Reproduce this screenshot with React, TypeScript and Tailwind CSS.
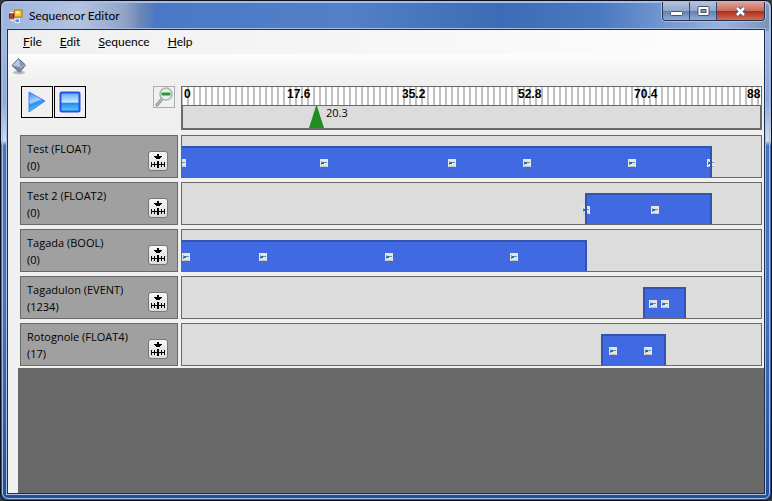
import React from "react";

const tracks = [
  { name: "Test", type: "FLOAT", value: 0, clips: [{ start: 0, end: 530 }], keys: [-4, 138, 266, 341, 446, 525] },
  { name: "Test 2", type: "FLOAT2", value: 0, clips: [{ start: 403, end: 530 }], keys: [400, 469] },
  { name: "Tagada", type: "BOOL", value: 0, clips: [{ start: 0, end: 405 }], keys: [0, 77, 203, 328] },
  { name: "Tagadulon", type: "EVENT", value: 1234, clips: [{ start: 461, end: 504 }], keys: [467, 479] },
  { name: "Rotognole", type: "FLOAT4", value: 17, clips: [{ start: 419, end: 484 }], keys: [427, 462] },
];

const span = 579;
const pct = (n: number) => `${(n / span) * 100}%`;

const labels = [
  { text: "0", at: 2 },
  { text: "17.6", at: 105 },
  { text: "35.2", at: 220 },
  { text: "52.8", at: 336 },
  { text: "70.4", at: 452 },
  { text: "88", at: 565 },
];

function AppIcon() {
  return (
    <svg width="14" height="14" viewBox="0 0 14 14" aria-hidden="true">
      <rect x="5.500" y="1" width="7.500" height="7" fill="#f6c733" stroke="#a9771a" />
      <rect x="6.500" y="2" width="4" height="3" fill="#ffeb91" />
      <rect x="0.500" y="5" width="4" height="4" fill="#d93a2b" stroke="#8d1f18" />
      <rect x="6" y="10" width="4.500" height="3.500" fill="#4d8ce8" stroke="#e4efff" />
      <path d="M1 3.500H4M2 11.500H4.500" stroke="#fff" />
    </svg>
  );
}

function DiamondIcon() {
  return (
    <svg width="16" height="17" viewBox="0 0 16 17" aria-hidden="true">
      <ellipse cx="8" cy="14.500" rx="6" ry="1.800" fill="#8b8b8b" opacity=".55" />
      <path d="M7.500 .5 14.500 7 8.500 14.500 1 7.500Z" fill="#8292b4" stroke="#5c6984" />
      <path d="M7.500 1 9.500 9.500 1.500 7.500Z" fill="#b9c6dd" />
      <path d="M1.500 7.500 9.500 9.500 8.500 14Z" fill="#7487aa" />
      <path d="M7.500 1 9.500 9.500 14 7" fill="none" stroke="#a8b8d5" />
    </svg>
  );
}

function PlayIcon() {
  return (
    <svg width="20" height="24" viewBox="0 0 20 24" aria-hidden="true">
      <defs>
        <linearGradient id="play" x1="0" y1="0" x2="0.300" y2="1">
          <stop offset="0" stopColor="#3d7cf0" />
          <stop offset=".5" stopColor="#a4d6ff" />
          <stop offset=".62" stopColor="#2f8cf0" />
          <stop offset="1" stopColor="#57dcff" />
        </linearGradient>
      </defs>
      <path d="M2 2 18 11 2 22Z" fill="url(#play)" stroke="#4a80f0" strokeLinejoin="round" />
    </svg>
  );
}

function StopIcon() {
  return (
    <svg width="22" height="22" viewBox="0 0 22 22" aria-hidden="true">
      <defs>
        <linearGradient id="stop" x1="0" y1="0" x2="0" y2="1">
          <stop offset="0" stopColor="#5fa4fa" />
          <stop offset=".5" stopColor="#c4ecff" />
          <stop offset=".58" stopColor="#2f86ee" />
          <stop offset="1" stopColor="#4bdcff" />
        </linearGradient>
      </defs>
      <rect x="1.500" y="1.500" width="19" height="19" rx="1" fill="url(#stop)" stroke="#2450e6" strokeWidth="2" />
    </svg>
  );
}

function ZoomOutIcon() {
  return (
    <svg width="20" height="20" viewBox="0 0 20 20" aria-hidden="true">
      <path d="M8 12 3 18" stroke="#8d8d8d" strokeWidth="3" strokeLinecap="round" />
      <path d="M8 12 3 18" stroke="#ddd" strokeWidth="1" strokeLinecap="round" />
      <circle cx="12" cy="7" r="6" fill="#e4f1ea" stroke="#a9b5b2" strokeWidth="1.500" />
      <rect x="7.500" y="5.500" width="9" height="3" rx="1" fill="#2e9a2e" />
    </svg>
  );
}

function KeyInsertIcon() {
  return (
    <svg width="16" height="16" viewBox="0 0 16 16" shapeRendering="crispEdges" aria-hidden="true">
      <path d="M7 1H9V3H12V4H11V5H10V6H6V5H5V4H4V3H7Z" />
      <path d="M1 9H2V11H4V9H5V11H7V8H9V11H11V9H12V11H14V9H15V14H14V12H12V14H11V12H9V15H7V12H5V14H4V12H2V14H1Z" />
    </svg>
  );
}

function KeyMarker() {
  return (
    <svg className="block" width="8" height="8" viewBox="0 0 8 8" shapeRendering="crispEdges" aria-hidden="true">
      <rect width="8" height="8" rx="1" fill="#e4e6e6" />
      <path d="M1 7H7V8H1Z" fill="#c4c2b8" />
      <path d="M1 2H2V3H3V5H2V6H1Z" fill="#77aac8" />
      <path d="M2 3H4V5H2Z" fill="#2169a0" />
      <path d="M1 4H3V5H1Z" fill="#2169a0" />
      <path d="M4 3H7V4H4Z" fill="#5b94ba" />
    </svg>
  );
}

function TitleBar() {
  return (
    <header className="relative flex h-[26px] items-center gap-1.5 pl-0.5">
      <AppIcon />
      <h1 className="text-[12px] leading-4 text-black">Sequencor Editor</h1>
      <div className="absolute -top-px right-0 flex h-[19px] overflow-hidden rounded-b border border-t-0 border-[#26334e] shadow-[0_0_0_1px_#a9c0e6]">
        <button aria-label="Minimize" className="flex w-[27px] items-center justify-center border-r border-[#34466c] bg-[linear-gradient(180deg,#b4c4df,#93a8cd_48%,#5f7fb0_50%,#8facd8)]">
          <svg width="13" height="13" viewBox="0 0 13 13" aria-hidden="true"><rect x=".5" y="6.500" width="12" height="4" rx="1" fill="#fff" stroke="#4b5366" /></svg>
        </button>
        <button aria-label="Maximize" className="flex w-[27px] items-center justify-center border-r border-[#34466c] bg-[linear-gradient(180deg,#b4c4df,#93a8cd_48%,#5f7fb0_50%,#8facd8)]">
          <svg width="13" height="11" viewBox="0 0 13 11" aria-hidden="true"><rect x="1" y=".5" width="11" height="9" rx="1" fill="#fff" stroke="#4b5366" /><rect x="4" y="3.500" width="5" height="3" fill="#7793bf" stroke="#4b5366" /></svg>
        </button>
        <button aria-label="Close" className="flex w-[47px] items-center justify-center bg-[linear-gradient(180deg,#dda39b,#cb6d5c_48%,#b02c18_50%,#cf6e55)]">
          <svg width="13" height="11" viewBox="0 0 13 11" aria-hidden="true"><path d="M3 2 10 9M10 2 3 9" stroke="#55506a" strokeWidth="4.500" /><path d="M3 2 10 9M10 2 3 9" stroke="#fff" strokeWidth="2.600" /></svg>
        </button>
      </div>
    </header>
  );
}

function Ruler() {
  return (
    <div className="relative flex h-11 min-w-0 flex-1 flex-col border border-b-2 border-[#696969] bg-[#dcdcdc]">
      <div className="h-[19px] border-b border-[#696969] bg-[repeating-linear-gradient(90deg,#c0c0c0_0_1px,#fff_1px_5px,#c0c0c0_5px_6px)] font-['Liberation_Sans',Arial,sans-serif]">
        {labels.map((l) => (
          <span key={l.text} className="absolute top-0 text-[12px] leading-[14px] font-bold" style={{ left: pct(l.at) }}>{l.text}</span>
        ))}
      </div>
      <div className="flex-1 border-x border-[#696969]" />
      <div className="absolute top-[19px] flex items-start gap-0.5" style={{ left: pct(127) }}>
        <svg width="15" height="22" viewBox="0 0 15 22" aria-hidden="true"><path d="M7 0H8L15 22H0Z" fill="#228b22" /></svg>
        <span className="font-['Open_Sans',sans-serif] text-[11px] leading-[14px]">20.3</span>
      </div>
    </div>
  );
}

function TrackRow({ track }: { track: (typeof tracks)[number] }) {
  return (
    <li className="flex gap-[3px]">
      <div className="flex h-[43px] w-[158px] shrink-0 items-end justify-between border border-[#696969] bg-[#a0a0a0] pr-[9px] pb-1.5 pl-1.5">
        <div className="self-start pt-1 font-['Open_Sans',sans-serif] text-[11px] leading-[17px]">
          <p>{track.name} ({track.type})</p>
          <p>({track.value})</p>
        </div>
        <button aria-label={`Insert key in ${track.name}`} className="flex size-5 items-center justify-center rounded-[3px] border border-[#777] bg-linear-to-b from-[#f8f8f8] to-[#dcdcdc]">
          <KeyInsertIcon />
        </button>
      </div>
      <div className="relative min-w-0 flex-1 overflow-hidden border border-[#696969] bg-[#dcdcdc]">
        {track.clips.map((c) => (
          <div key={c.start} className="absolute top-2.5 bottom-0 bg-[#4169e1]" style={{ left: pct(c.start), width: pct(c.end - c.start) }} />
        ))}
        {track.keys.map((k) => (
          <div key={k} className="absolute top-[23px]" style={{ left: pct(k) }}><KeyMarker /></div>
        ))}
        {track.clips.map((c) => (
          <div key={c.start} className={`absolute top-2.5 bottom-0 border-t-2 border-r-2 border-[#3353b0] ${c.start ? "border-l-2" : ""}`} style={{ left: pct(c.start), width: pct(c.end - c.start) }} />
        ))}
      </div>
    </li>
  );
}

export default function App() {
  return (
    <div className="flex min-h-screen flex-col bg-[#3b3b35] font-[Lato,'Open_Sans',sans-serif] text-black">
      <div className="flex flex-1 flex-col rounded-[7px] border border-[#0b1020] bg-[linear-gradient(180deg,#a9bfe4_0,#8ca8d8_20%,#d3dcee_28%,#4a74b8_29%,#4a74b8_60%,#254f91_100%)] p-px">
        <div className="flex flex-1 flex-col rounded-md border border-[#a6bfe8] bg-[linear-gradient(90deg,#9eb5dc_0,#b4c3df_10%,#8fa3c8_16%,#6b86b5_18%,#4a78c4_20%,#5380c8_45%,#3c6cb5_65%,#4a79c2_78%,#9ab2df_94%,#7e93b8_100%)] bg-size-[100%_28px] bg-no-repeat px-1 pb-1">
          <TitleBar />
          <main className="flex flex-1 flex-col border border-[#1d2f50] bg-[#f0f0f0] shadow-[0_0_0_1px_#a9c0e6]">
            <nav className="flex h-6 items-center gap-[18px] bg-linear-to-r from-[#f0f0f0] to-[#fdfdfd] pl-[15px] text-[12px] leading-4">
              <button><u>F</u>ile</button>
              <button><u>E</u>dit</button>
              <button><u>S</u>equence</button>
              <button><u>H</u>elp</button>
            </nav>
            <div className="flex h-[25px] items-center bg-linear-to-b from-[#fdfdfd] to-[#f0f0f0] pl-[3px]">
              <button aria-label="New sequence"><DiamondIcon /></button>
            </div>
            <div className="flex pt-[7px] pr-0.5 pl-[13px]">
              <div className="flex w-40 shrink-0 items-start gap-px">
                <button aria-label="Play" className="flex size-8 items-center justify-center border border-black"><PlayIcon /></button>
                <button aria-label="Stop" className="flex size-8 items-center justify-center border border-black"><StopIcon /></button>
                <button aria-label="Zoom out" className="mr-1.5 ml-auto flex size-[22px] items-center justify-center border border-[#adadad]"><ZoomOutIcon /></button>
              </div>
              <Ruler />
            </div>
            <ul className="flex flex-col gap-1 pt-[5px] pr-0.5 pb-0.5 pl-3">
              {tracks.map((t) => <TrackRow key={t.name} track={t} />)}
            </ul>
            <div className="ml-2.5 flex-1 bg-[#696969]" />
          </main>
        </div>
      </div>
    </div>
  );
}
